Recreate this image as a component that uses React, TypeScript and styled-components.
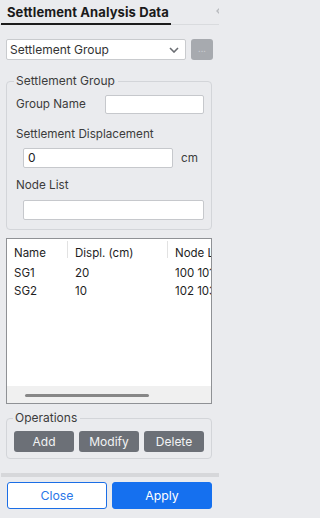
import React from "react";
import styled, { createGlobalStyle } from "styled-components";

const Global = createGlobalStyle`
  html, body { margin: 0; padding: 0; background: #eaebee; }
  body { font-family: Inter, "Noto Sans", "Liberation Sans", sans-serif; font-size: 11.5px; color: #333; }
  * { box-sizing: border-box; }
`;

const Panel = styled.div`
  width: 219px;
  height: 518px;
  background: #eaebee;
  display: flex;
  flex-direction: column;
  overflow: hidden;
  position: relative;
`;

const Header = styled.div`
  height: 25px;
  display: flex;
  align-items: flex-end;
  border-bottom: 1px solid #d9dbde;
  position: relative;
`;

const Tab = styled.div`
  margin-left: 1px;
  width: 170px;
  height: 25px;
  padding: 4px 0 0 6px;
  border-bottom: 2px solid #1c1c1c;
  margin-bottom: -1px;
  font-weight: 700;
  font-size: 13px;
  color: #1a1a1a;
  letter-spacing: 0.1px;
`;

const Collapse = styled.svg`
  position: absolute;
  right: -3px;
  top: 7px;
`;

const Body = styled.div`
  padding: 0 7px 0 6px;
  display: flex;
  flex-direction: column;
`;

const SelectRow = styled.div`
  margin-top: 14px;
  display: flex;
  gap: 5px;
  height: 21px;
`;

const Select = styled.div`
  flex: 0 0 180px;
  background: #fff;
  border: 1px solid #c9cbce;
  border-radius: 2px;
  display: flex;
  align-items: center;
  justify-content: space-between;
  padding: 0 6px 0 3px;
  font-size: 12px;
  color: #333;
`;

const MoreButton = styled.div`
  flex: 0 0 22px;
  background: #a7aaaf;
  border-radius: 3px;
  color: #c9cbcf;
  font-size: 9px;
  display: flex;
  align-items: center;
  justify-content: center;
  padding-bottom: 2px;
`;

const Fieldset = styled.fieldset<{ $top: number; $h: number }>`
  margin: ${(p) => p.$top}px 0 0 0;
  padding: 0 7px 0 9px;
  border: 1px solid #d3d5d9;
  border-radius: 4px;
  height: ${(p) => p.$h}px;
  min-width: 0;
`;

const Legend = styled.legend<{ $shift?: number }>`
  margin-left: ${(p) => p.$shift ?? -2}px;
  padding: 0 3px 0 2px;
  font-size: 12px;
  color: #3c3c3c;
  line-height: 14px;
`;

const Row = styled.div<{ $mt?: number }>`
  display: flex;
  align-items: center;
  justify-content: space-between;
  margin-top: ${(p) => p.$mt ?? 0}px;
`;

const Label = styled.div<{ $mt?: number }>`
  font-size: 11.7px;
  color: #3c3c3c;
  margin-top: ${(p) => p.$mt ?? 0}px;
  line-height: 15px;
`;

const Input = styled.div<{ $w: number; $h?: number }>`
  width: ${(p) => p.$w}px;
  height: ${(p) => p.$h ?? 20}px;
  background: #fff;
  border: 1px solid #c6c8cc;
  border-radius: 2px;
  font-size: 12px;
  color: #222;
  padding: 1px 0 0 4px;
  line-height: 16px;
`;

const Unit = styled.span`
  font-size: 11.7px;
  color: #3c3c3c;
  margin-right: 6px;
`;

const Indented = styled.div<{ $mt: number }>`
  padding-left: 7px;
  margin-top: ${(p) => p.$mt}px;
`;

const Table = styled.div`
  margin-top: 8px;
  height: 166px;
  width: 206px;
  background: #fff;
  border: 1px solid #8f9195;
  display: flex;
  flex-direction: column;
  overflow: hidden;
`;

const TableGrid = styled.div`
  flex: 1;
  display: grid;
  grid-template-columns: 60px 100px 60px;
  grid-auto-rows: min-content;
  font-size: 11.5px;
  color: #1e1e1e;
`;

const HeadCell = styled.div<{ $sep?: boolean }>`
  height: 17px;
  margin-top: 2px;
  padding: 5px 0 0 7px;
  border-left: ${(p) => (p.$sep ? "1px solid #e2e2e2" : "none")};
  white-space: nowrap;
  line-height: 14px;
`;

const Cell = styled.div<{ $first?: boolean }>`
  height: 18px;
  line-height: 18px;
  padding-left: ${(p) => (p.$first ? 7 : 8)}px;
  white-space: nowrap;
`;

const Spacer = styled.div`
  grid-column: 1 / -1;
  height: 6px;
`;

const HScroll = styled.div`
  height: 17px;
  background: #f0f0f0;
  display: flex;
  align-items: center;
  padding-left: 18px;
`;

const Thumb = styled.div`
  width: 124px;
  height: 3px;
  border-radius: 2px;
  background: #878787;
  margin-top: 2px;
`;

const ButtonRow = styled.div`
  display: flex;
  gap: 5px;
  margin-top: 6px;
  margin-left: -2px;
`;

const OpButton = styled.div`
  width: 60px;
  height: 21px;
  background: #6c7077;
  border-radius: 3px;
  color: #f2f3f4;
  font-size: 12px;
  display: flex;
  align-items: center;
  justify-content: center;
`;

const Divider = styled.div`
  margin-top: 14px;
  margin-left: 1px;
  height: 4px;
  background: #d6d7da;
`;

const Footer = styled.div`
  display: flex;
  gap: 5px;
  padding: 5px 0 0 7px;
`;

const FooterButton = styled.div<{ $primary?: boolean }>`
  width: 100px;
  height: 27px;
  border-radius: 3px;
  border: 1px solid ${(p) => (p.$primary ? "#1570ef" : "#1b6ee6")};
  background: ${(p) => (p.$primary ? "#1570ef" : "#ffffff")};
  color: ${(p) => (p.$primary ? "#ffffff" : "#2a77e8")};
  font-size: 12.3px;
  display: flex;
  align-items: center;
  justify-content: center;
`;

export default function App() {
  return (
    <Panel>
      <Global />
      <Header>
        <Tab>Settlement Analysis Data</Tab>
        <Collapse width="6" height="8" viewBox="0 0 6 8">
          <path d="M4 1 L1 4 L4 7" stroke="#b9bbbf" strokeWidth="1.4" fill="none" />
        </Collapse>
      </Header>
      <Body>
        <SelectRow>
          <Select>
            <span>Settlement Group</span>
            <svg width="10" height="6" viewBox="0 0 10 6">
              <path d="M1 1 L5 5 L9 1" stroke="#6a6d72" strokeWidth="1.6" fill="none" />
            </svg>
          </Select>
          <MoreButton>...</MoreButton>
        </SelectRow>

        <Fieldset $top={14} $h={156}>
          <Legend>Settlement Group</Legend>
          <Row $mt={7}>
            <Label>Group Name</Label>
            <Input $w={99} $h={19} />
          </Row>
          <Label $mt={13}>Settlement Displacement</Label>
          <Indented $mt={6}>
            <Row>
              <Input $w={150}>0</Input>
              <Unit>cm</Unit>
            </Row>
          </Indented>
          <Label $mt={10}>Node List</Label>
          <Indented $mt={7}>
            <Input $w={181} />
          </Indented>
        </Fieldset>

        <Table>
          <TableGrid>
            <HeadCell>Name</HeadCell>
            <HeadCell $sep>Displ. (cm)</HeadCell>
            <HeadCell $sep>Node L</HeadCell>
            <Spacer />
            <Cell $first>SG1</Cell>
            <Cell>20</Cell>
            <Cell>100 101</Cell>
            <Cell $first>SG2</Cell>
            <Cell>10</Cell>
            <Cell>102 103</Cell>
          </TableGrid>
          <HScroll>
            <Thumb />
          </HScroll>
        </Table>

        <Fieldset $top={7} $h={48}>
          <Legend $shift={-3}>Operations</Legend>
          <ButtonRow>
            <OpButton>Add</OpButton>
            <OpButton>Modify</OpButton>
            <OpButton>Delete</OpButton>
          </ButtonRow>
        </Fieldset>
      </Body>
      <Divider />
      <Footer>
        <FooterButton>Close</FooterButton>
        <FooterButton $primary>Apply</FooterButton>
      </Footer>
    </Panel>
  );
}
